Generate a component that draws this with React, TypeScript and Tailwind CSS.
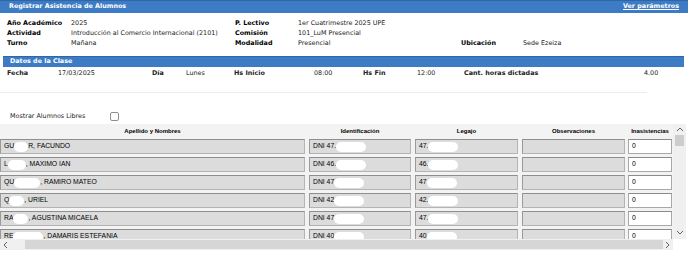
import React from 'react'

interface Alumno {
  pre: string
  blob: string
  post: string
  dni: string
  legajo: string
}

const alumnos: Alumno[] = [
  { pre: 'GU', blob: 'w-[14px]', post: 'R, FACUNDO', dni: '47.', legajo: '47.' },
  { pre: 'L', blob: 'w-[18px]', post: ', MAXIMO IAN', dni: '46.', legajo: '46.' },
  { pre: 'QU', blob: 'w-[26px]', post: ', RAMIRO MATEO', dni: '47', legajo: '47' },
  { pre: 'Q', blob: 'w-[15px]', post: ', URIEL', dni: '42', legajo: '42.' },
  { pre: 'RA', blob: 'w-[15px]', post: ', AGUSTINA MICAELA', dni: '47', legajo: '47.' },
  { pre: 'RE', blob: 'w-[30px]', post: ', DAMARIS ESTEFANIA', dni: '40', legajo: '40' },
]

// mancha blanca que tapa datos personales
function Blob({ className }: { className: string }) {
  return <span className={`inline-block h-[10px] rounded-full bg-white ${className}`} />
}

function Chevron({ dir }: { dir: 'up' | 'down' | 'left' | 'right' }) {
  const d = {
    up: 'M1 5 L4 2 L7 5',
    down: 'M1 2 L4 5 L7 2',
    left: 'M5 1 L2 4 L5 7',
    right: 'M2 1 L5 4 L2 7',
  }[dir]
  return (
    <svg width="8" height="8" viewBox="0 0 8 8" className="block">
      <path d={d} fill="none" stroke="#606060" strokeWidth="1" />
    </svg>
  )
}

function Label({ children }: { children: React.ReactNode }) {
  return <span className="font-bold text-black">{children}</span>
}

const grayInput =
  'h-[15px] flex items-center pl-[3px] bg-[#dcdcdc] border border-[#b4b4b4] border-t-[#8e8e8e] border-l-[#9a9a9a] overflow-hidden whitespace-nowrap'

export default function App() {
  return (
    <div className="w-[690px] h-[255px] bg-white overflow-hidden font-['DejaVu_Sans',sans-serif] text-[6.4px] text-[#222]">
      {/* Cabecera */}
      <div className="w-[688px] h-[13px] bg-[#3d7cc4] border-t border-[#2f66a8] flex items-center justify-between pl-[9px] pr-[9px] text-white font-bold">
        <span>Registrar Asistencia de Alumnos</span>
        <span className="underline">Ver parámetros</span>
      </div>

      <div className="mt-[5px] pl-[7px] grid grid-cols-[64px_164px_63px_163px_62px_1fr] leading-[10px]">
        <Label>Año Académico</Label>
        <span>2025</span>
        <Label>P. Lectivo</Label>
        <span>1er Cuatrimestre 2025 UPE</span>
        <span />
        <span />
        <Label>Actividad</Label>
        <span>Introducción al Comercio Internacional (2101)</span>
        <Label>Comisión</Label>
        <span>101_LuM Presencial</span>
        <span />
        <span />
        <Label>Turno</Label>
        <span>Mañana</span>
        <Label>Modalidad</Label>
        <span>Presencial</span>
        <Label>Ubicación</Label>
        <span>Sede Ezeiza</span>
      </div>

      {/* Datos de la clase */}
      <div className="mt-[8px] ml-[3px] w-[681px] h-[11px] bg-[#3d7cc4] border-t border-[#2f66a8] flex items-center pl-[7px] text-white font-bold">
        Datos de la Clase
      </div>

      <div className="mt-[2px] pl-[7px] h-[10px] flex items-center">
        <span className="w-[51px] font-bold">Fecha</span>
        <span className="w-[94px]">17/03/2025</span>
        <span className="w-[34px] font-bold">Día</span>
        <span className="w-[48px]">Lunes</span>
        <span className="w-[80px] font-bold">Hs Inicio</span>
        <span className="w-[49px]">08:00</span>
        <span className="w-[54px] font-bold">Hs Fin</span>
        <span className="w-[47px]">12:00</span>
        <span className="w-[180px] font-bold">Cant. horas dictadas</span>
        <span>4.00</span>
      </div>

      <div className="mt-[13px] w-[647px] h-px bg-[#ececec]" />

      <div className="mt-[18px] pl-[10px] h-[11px] flex items-center">
        <span className="w-[100px]">Mostrar Alumnos Libres</span>
        <span className="w-[9px] h-[9px] rounded-[2px] border border-[#8f8f8f] bg-white" />
      </div>

      {/* Tabla de alumnos */}
      <div className="mt-[2px] w-[687px] flex">
        <div className="w-[673px] h-[115px] overflow-hidden bg-[#f3f3f3]">
          <div className="h-[15px] flex items-center font-['Liberation_Sans',sans-serif] font-bold text-[6px] text-black">
            <span className="w-[305px] text-center">Apellido y Nombres</span>
            <span className="w-[102px] ml-[4px] text-center">Identificación</span>
            <span className="w-[103px] ml-[4px] text-center">Legajo</span>
            <span className="w-[103px] ml-[4px] text-center">Observaciones</span>
            <span className="w-[44px] ml-[3px] text-center">Inasistencias</span>
          </div>
          {alumnos.map((a, i) => (
            <div
              key={i}
              className="flex mb-[3px] font-['Liberation_Sans',sans-serif] text-[6.8px] text-black"
            >
              <div className={`w-[305px] ${grayInput}`}>
                <span>{a.pre}</span>
                <Blob className={a.blob} />
                <span>{a.post}</span>
              </div>
              <div className={`w-[102px] ml-[4px] ${grayInput}`}>
                <span>DNI {a.dni}</span>
                <Blob className="w-[30px]" />
              </div>
              <div className={`w-[103px] ml-[4px] ${grayInput}`}>
                <span>{a.legajo}</span>
                <Blob className="w-[30px]" />
              </div>
              <div className={`w-[103px] ml-[4px] ${grayInput}`} />
              <div className="w-[44px] ml-[3px] h-[15px] flex items-center pl-[3px] bg-white border border-[#a8a8a8] border-t-[#8a8a8a]">
                0
              </div>
            </div>
          ))}
        </div>
        <div className="w-[13px] h-[115px] bg-[#f0f0f0] flex flex-col items-center">
          <div className="mt-[2px]">
            <Chevron dir="up" />
          </div>
          <div className="mt-[1px] w-[9px] h-[11px] bg-[#cdcdcd]" />
          <div className="mt-auto mb-[2px]">
            <Chevron dir="down" />
          </div>
        </div>
      </div>
      <div className="w-[673px] h-[11px] bg-[#f0f0f0] flex items-center">
        <div className="ml-[2px]">
          <Chevron dir="left" />
        </div>
        <div className="ml-[15px] w-[638px] h-[9px] bg-[#d6d6d6]" />
        <div className="ml-[1px]">
          <Chevron dir="right" />
        </div>
      </div>
    </div>
  )
}
